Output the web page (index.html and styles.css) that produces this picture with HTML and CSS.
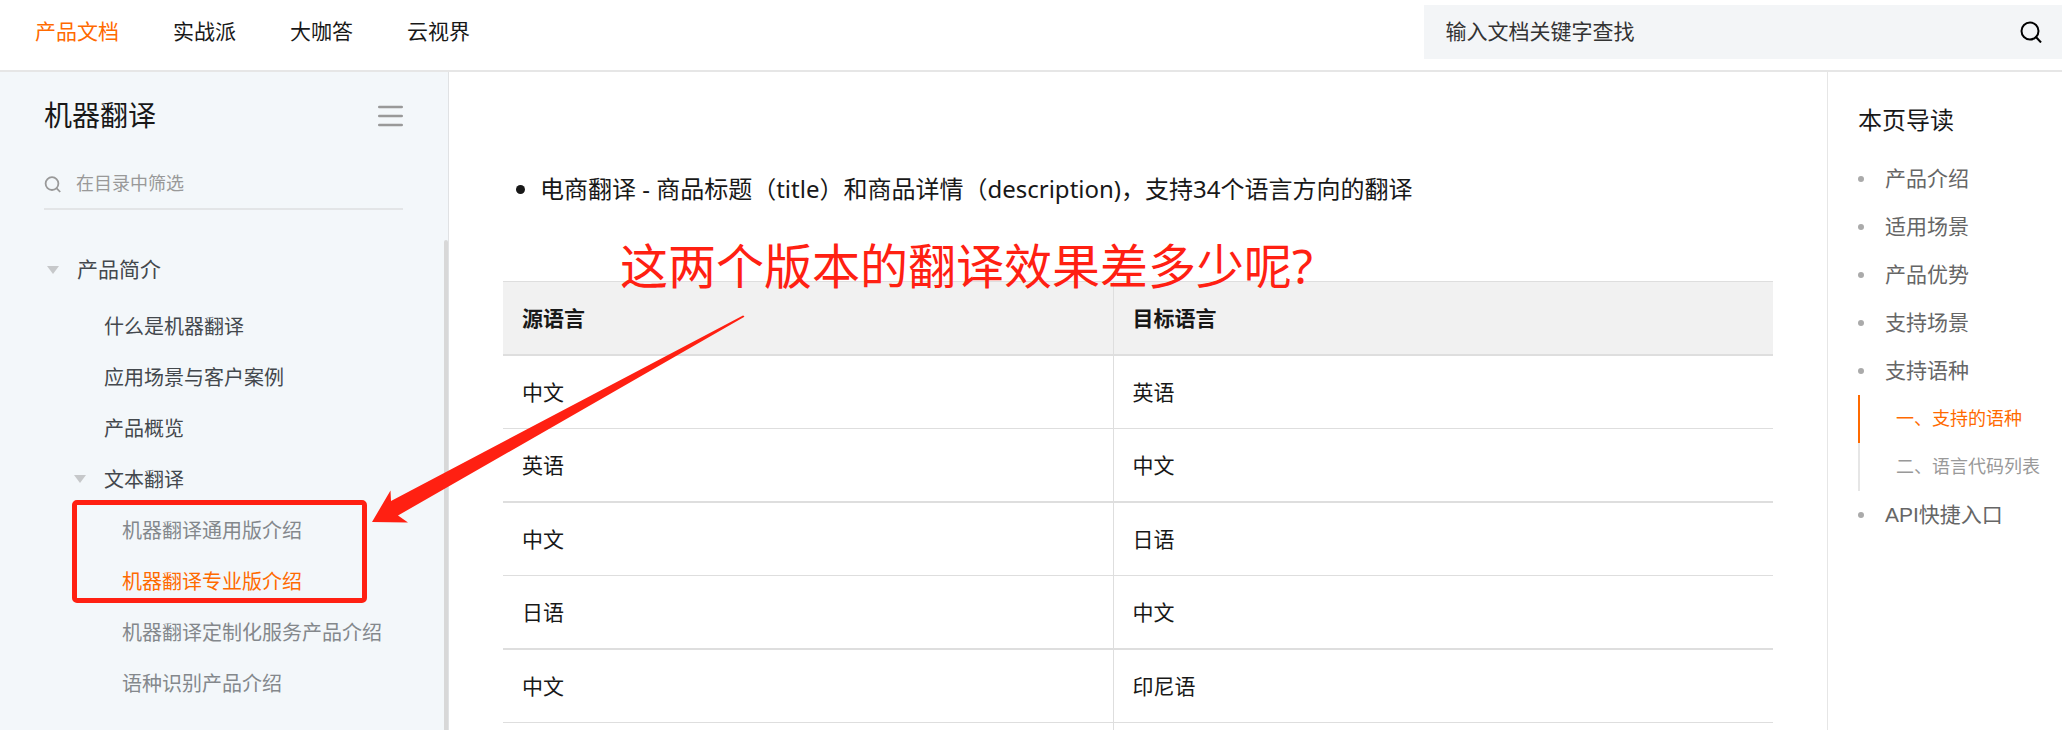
FILE: index.html
```
<!DOCTYPE html>
<html lang="zh-CN">
  <head>
    <meta charset="UTF-8" />
    <meta name="viewport" content="width=device-width, initial-scale=1.0" />
    <title>机器翻译 - 产品文档</title>
    <link rel="stylesheet" href="styles.css">
  </head>
  <body>
    <div class="page">
      <header class="topbar">
        <nav class="topnav">
          <a class="active" href="#">产品文档</a>
          <a href="#">实战派</a>
          <a href="#">大咖答</a>
          <a href="#">云视界</a>
        </nav>
        <form class="search">
          <input type="text" placeholder="输入文档关键字查找" aria-label="输入文档关键字查找" />
          <button type="button" aria-label="搜索">
            <svg width="22" height="22" viewBox="0 0 22 22" fill="none" stroke="currentColor" stroke-width="2">
              <circle cx="10" cy="10" r="8.5" />
              <path d="M15.5 15.5L21 21.5" />
            </svg>
          </button>
        </form>
      </header>

      <div class="content">
        <aside class="sidebar">
          <div class="sidebar-head">
            <h2>机器翻译</h2>
            <button type="button" aria-label="收起目录">
              <svg width="25" height="22" viewBox="0 0 25 22" stroke="currentColor" stroke-width="2.6" stroke-linecap="round">
                <path d="M1.3 2h22.4M1.3 11h22.4M1.3 20h22.4" />
              </svg>
            </button>
          </div>
          <div class="filter">
            <svg width="17" height="17" viewBox="0 0 17 17" fill="none" stroke="currentColor" stroke-width="1.8">
              <circle cx="8" cy="7.6" r="6.4" />
              <path d="M12.2 11.8L16.2 16" />
            </svg>
            <input type="text" placeholder="在目录中筛选" aria-label="在目录中筛选" />
          </div>
          <div class="tree-scroll">
            <ul class="tree">
              <li class="level-1"><span class="caret"></span><a href="#">产品简介</a></li>
              <li class="level-2"><a href="#">什么是机器翻译</a></li>
              <li class="level-2"><a href="#">应用场景与客户案例</a></li>
              <li class="level-2"><a href="#">产品概览</a></li>
              <li class="level-2"><span class="caret"></span><a href="#">文本翻译</a></li>
              <li class="level-3"><a href="#">机器翻译通用版介绍</a></li>
              <li class="level-3 active"><a href="#">机器翻译专业版介绍</a></li>
              <li class="level-3"><a href="#">机器翻译定制化服务产品介绍</a></li>
              <li class="level-3"><a href="#">语种识别产品介绍</a></li>
            </ul>
            <div class="scrollbar"></div>
          </div>
        </aside>

        <main class="doc">
          <ul class="doc-list">
            <li>电商翻译 - 商品标题（title）和商品详情（description)，支持34个语言方向的翻译</li>
          </ul>
          <table class="langs">
            <thead>
              <tr><th>源语言</th><th>目标语言</th></tr>
            </thead>
            <tbody>
              <tr><td>中文</td><td>英语</td></tr>
              <tr><td>英语</td><td>中文</td></tr>
              <tr><td>中文</td><td>日语</td></tr>
              <tr><td>日语</td><td>中文</td></tr>
              <tr><td>中文</td><td>印尼语</td></tr>
              <tr><td></td><td></td></tr>
            </tbody>
          </table>
        </main>

        <aside class="toc">
          <h3>本页导读</h3>
          <ul>
            <li class="item"><a href="#">产品介绍</a></li>
            <li class="item"><a href="#">适用场景</a></li>
            <li class="item"><a href="#">产品优势</a></li>
            <li class="item"><a href="#">支持场景</a></li>
            <li class="item"><a href="#">支持语种</a></li>
            <li class="sub active"><a href="#">一、支持的语种</a></li>
            <li class="sub"><a href="#">二、语言代码列表</a></li>
            <li class="item"><a href="#">API快捷入口</a></li>
          </ul>
        </aside>
      </div>

      <!-- notes drawn over the page -->
      <div class="mark-box"></div>
      <p class="mark-text">这两个版本的翻译效果差多少呢?</p>
      <svg class="mark-arrow" width="374" height="210" viewBox="0 0 374 210">
        <path fill="#ff2012" d="M0 208L18.5 176.5L19 187L371 1.5Q373 2 372 3L26 201.5L36 208.5Z" />
      </svg>
    </div>
  </body>
</html>
```
FILE: styles.css
```
* {
  box-sizing: border-box;
}

body {
  margin: 0;
  background-color: #fff;
  color: #181818;
  font-family: "Noto Sans", "Noto Sans CJK SC", sans-serif;
  font-size: 21px;
}

h2,
h3,
p,
ul {
  margin: 0;
  padding: 0;
  font-weight: 400;
}

a {
  color: inherit;
  text-decoration: none;
}

button {
  display: flex;
  padding: 0;
  border: 0;
  background: none;
  cursor: pointer;
}

input {
  flex: 1;
  min-width: 0;
  padding: 0 0 2px;
  border: 0;
  outline: 0;
  background: none;
  color: inherit;
  font-family: inherit;
  font-size: inherit;
}

input::placeholder {
  color: inherit;
  opacity: 1;
}

.page {
  position: relative;
  display: flex;
  flex-direction: column;
  height: 100vh;
  overflow: hidden;
}

.topbar {
  display: flex;
  flex-shrink: 0;
  justify-content: space-between;
  height: 72px;
  padding: 5px 0 11px 35px;
  border-bottom: 2px solid #e6e6e6;
}

.topnav {
  display: flex;
  align-items: center;
  gap: 54px;
  padding-bottom: 4px;
}

.topnav .active {
  color: #ff6a00;
}

.search {
  display: flex;
  align-items: center;
  width: 31.5%;
  padding: 0 20px 0 22px;
  background-color: #f3f5f7;
  color: #333;
}

.content {
  display: flex;
  flex: 1;
  min-height: 0;
}

.sidebar {
  display: flex;
  flex-direction: column;
  flex-shrink: 0;
  width: 449px;
  border-right: 1px solid #e0e2e4;
  background-color: #f3f7fa;
}

.sidebar-head {
  display: flex;
  align-items: center;
  justify-content: space-between;
  height: 88px;
  padding: 0 45px 0 44px;
}

.sidebar-head h2 {
  padding-bottom: 4px;
  font-size: 28px;
}

.sidebar-head button {
  color: #999;
}

.filter {
  display: flex;
  align-items: center;
  gap: 15px;
  height: 50px;
  margin: 0 45px 0 44px;
  border-bottom: 2px solid #e3e5e7;
  color: #999;
  font-size: 18px;
}

.tree-scroll {
  display: flex;
  flex: 1;
  min-height: 0;
  margin-top: 30px;
}

.tree {
  flex: 1;
  list-style: none;
  color: #43484d;
  font-size: 20px;
}

.tree li {
  display: flex;
  align-items: center;
  height: 51px;
}

.tree .level-1 {
  height: 60px;
  padding-left: 47px;
  font-size: 21px;
}

.level-1 a {
  padding-bottom: 4px;
}

.tree .level-2 {
  padding-left: 104px;
}

.tree .level-3 {
  padding-left: 122px;
  color: #84888c;
}

.tree .active {
  color: #ff6a00;
}

.caret {
  margin-right: 18px;
  border: 6px solid transparent;
  border-top: 8px solid #c6c8ca;
  border-bottom: 0;
}

.level-2 .caret {
  margin-left: -30px;
}

.scrollbar {
  width: 4px;
  border-radius: 4px 4px 0 0;
  background-color: #d8d8d8;
}

.doc {
  flex: 1;
  min-width: 0;
  padding: 99px 54px 0;
}

.doc-list {
  padding-left: 37px;
  font-size: 24px;
  line-height: 36px;
}

.langs {
  width: 100%;
  margin-top: 74px;
  border-top: 1px solid #dedede;
  border-spacing: 0;
  table-layout: fixed;
}

.langs th,
.langs td {
  height: 73px;
  padding: 0 19px 2px;
  border-bottom: 1px solid #dedede;
  text-align: left;
}

.langs th {
  height: 74px;
  border-bottom-width: 2px;
  background-color: #f1f1f1;
}

.langs tr:nth-child(even) td {
  height: 74px;
  border-bottom-width: 2px;
}

.langs th:first-child {
  width: 48%;
}

.langs th + th,
.langs td + td {
  border-left: 1px solid #dedede;
}

.toc {
  flex-shrink: 0;
  width: 235px;
  padding: 25px 0 0 30px;
  border-left: 1px solid #e6e6e6;
  color: #666;
  font-family: "Liberation Sans", "Noto Sans CJK SC", sans-serif;
}

.toc h3 {
  height: 58px;
  color: #181818;
  font-size: 24px;
  line-height: 48px;
}

.toc ul {
  list-style: none;
}

.toc li {
  display: flex;
  align-items: center;
  height: 48px;
}

.toc a {
  padding-bottom: 4px;
}

.toc .item::before {
  content: "";
  width: 6px;
  height: 6px;
  margin-right: 21px;
  border-radius: 50%;
  background-color: #aaa;
}

.toc .sub {
  padding-left: 36px;
  border-left: 2px solid #e6e6e6;
  color: #999;
  font-size: 18px;
}

.toc .active {
  border-color: #ff6a00;
  color: #ff6a00;
}

.mark-box {
  position: absolute;
  top: 500px;
  left: 72px;
  width: 295px;
  height: 103px;
  border: 5px solid #ff2012;
  border-radius: 5px;
}

.mark-text {
  position: absolute;
  top: 234px;
  left: 620px;
  color: #ff2012;
  font-size: 48px;
  line-height: 64px;
  white-space: nowrap;
}

.mark-arrow {
  position: absolute;
  top: 314px;
  left: 372px;
}
```
